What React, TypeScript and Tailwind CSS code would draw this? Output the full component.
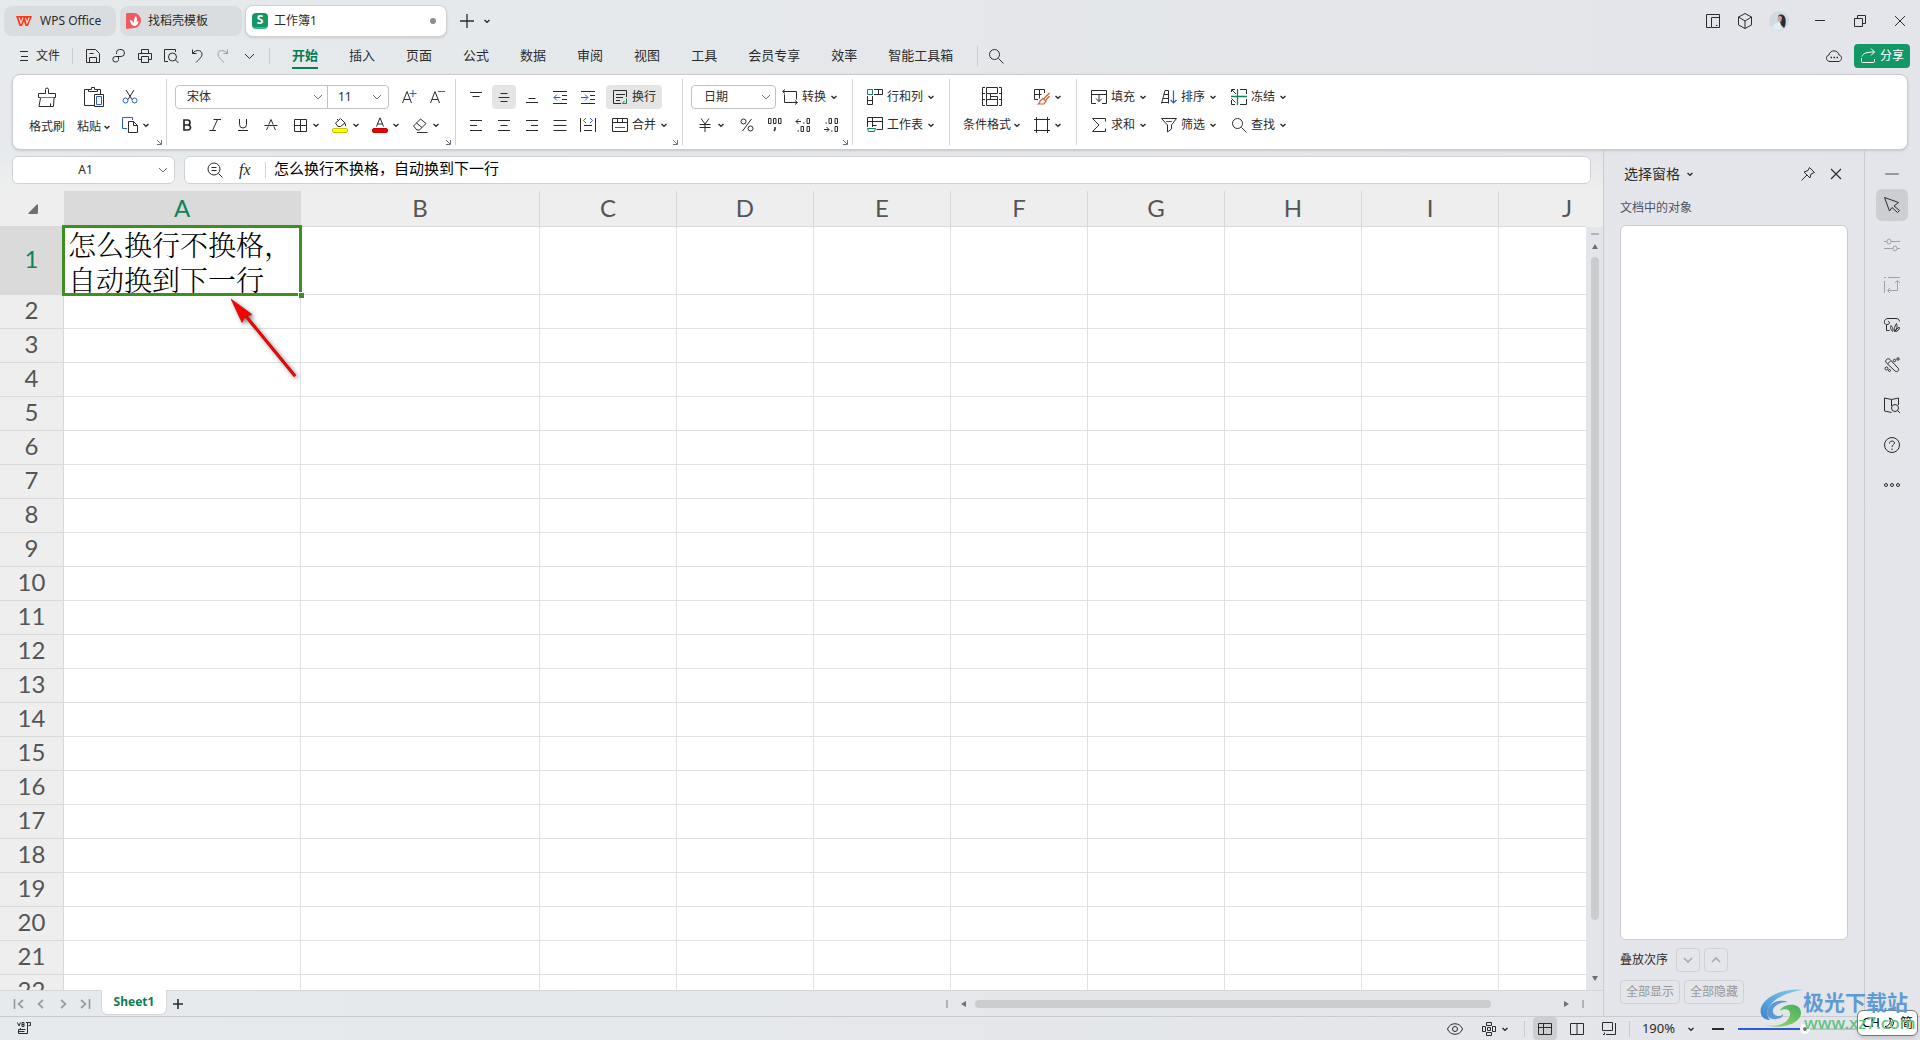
import type { ReactNode } from "react";
import { clsx } from "clsx";

type IconProps = { children: ReactNode; size?: string; className?: string; box?: number };

const Icon = ({ children, size = "size-4", className, box = 16 }: IconProps) => (
  <svg
    viewBox={`0 0 ${box} ${box}`}
    className={clsx("shrink-0", size, className)}
    fill="none"
    stroke="currentColor"
    aria-hidden="true"
  >
    {children}
  </svg>
);

const Caret = ({ className }: { className?: string }) => (
  <Icon box={8} size="size-2" className={className}>
    <path d="M1.5 3 4 5.2 6.5 3" strokeWidth="1.4" />
  </Icon>
);

const WideCaret = ({ className }: { className?: string }) => (
  <Icon box={10} size="size-2.5" className={clsx("text-gray-500", className)}>
    <path d="M1 3 5 7 9 3" />
  </Icon>
);

const BLUE = "#2b5bd7";
const GREEN = "#12825a";
const ORANGE = "#c8612c";

const icons = {
  save: (
    <Icon>
      <path d="M1.5 1.5h9l4 4v9h-13zM4.5 14.5v-5h7v5M4.5 5.5h4" />
    </Icon>
  ),
  link: (
    <Icon>
      <path d="M5.500 6V4.500a3 3 0 0 1 3-3H10a3 3 0 0 1 0 7H4.500a2.500 2.500 0 0 0 0 5.500c2 0 3-1 3-2.500v-3" />
    </Icon>
  ),
  print: (
    <Icon>
      <path d="M4.500 5V1.500h7V5M4 11.500H1.500v-6h13v6H12M4.500 8.500h7v6h-7z" />
    </Icon>
  ),
  preview: (
    <Icon>
      <path d="M5 13.500H1.500v-12h11V4" />
      <circle cx="9.500" cy="9" r="4" />
      <path d="m12.500 12 3 3" />
    </Icon>
  ),
  undo: (
    <Icon>
      <path d="M3.500 1.500v4h4M3.500 5.500C7 1 13 2 13 6c0 3-3 5.500-6 8.500" />
    </Icon>
  ),
  redo: (
    <Icon className="text-gray-400">
      <path d="M12.500 1.500v4h-4M12.500 5.500C9 1 3 2 3 6c0 3 3 5.500 6 8.500" />
    </Icon>
  ),
  search: (
    <Icon>
      <circle cx="6.500" cy="6.500" r="5" />
      <path d="m10.500 10.500 5 5" />
    </Icon>
  ),
  scissors: (
    <Icon>
      <path d="M4 1 10 10.500M12 1 6 10.500" />
      <circle cx="3.500" cy="11.500" r="2.500" stroke={BLUE} />
      <circle cx="12.500" cy="11.500" r="2.500" stroke={BLUE} />
    </Icon>
  ),
  copy: (
    <Icon>
      <path d="M10.500 3V.500h-10v11H5" stroke={BLUE} />
      <path d="M6.500 4.500h5l4 4v7h-9zM11.500 4.500v4h4" />
    </Icon>
  ),
  fontUp: (
    <Icon>
      <path d="M1.500 14 6 2.500 10.500 14M3 10.500h6" />
      <path d="M12 1v7M8.500 4.500h7" stroke={BLUE} />
    </Icon>
  ),
  fontDown: (
    <Icon>
      <path d="M1.500 14 6 2.500 10.500 14M3 10.500h6" />
      <path d="M9 2.500h7" stroke={BLUE} />
    </Icon>
  ),
  bold: (
    <Icon>
      <path d="M5 3h3.500a2.300 2.300 0 0 1 0 5H5zM5 8h4a2.500 2.500 0 0 1 0 5H5z" strokeWidth="1.700" />
    </Icon>
  ),
  italic: (
    <Icon>
      <path d="M6.500 2.500H14M2.500 13.500H9M10.500 2.500l-5 11" />
    </Icon>
  ),
  underline: (
    <Icon>
      <path d="M4.500 2v5.500a3.500 3.500 0 0 0 7 0V2M3 13.500h10" />
    </Icon>
  ),
  strike: (
    <Icon>
      <path d="m3.500 13 1.700-3.500M12.500 13l-1.700-3.500M5.800 7.500 8 2.500l2.200 5M1.500 8.500h13" />
    </Icon>
  ),
  borders: (
    <Icon>
      <path d="M2.500 2.500h12v12h-12zM8.500 2.500v12M2.500 8.500h12" />
    </Icon>
  ),
  fill: (
    <Icon>
      <path d="m3.500 6 5-4.500 4.500 4.500-4.500 3.500H6zM6.500 3.500 5 2M13.500 6.500v2.500" />
      <rect x=".5" y="11.500" width="15" height="4" rx="1.500" fill="#ffff00" stroke="#c5c500" />
    </Icon>
  ),
  fontColor: (
    <Icon>
      <path d="M4.500 9.500 8 .800l3.500 8.700M5.500 7h5" />
      <rect x=".5" y="11.500" width="15" height="4" rx="1.500" fill="#f40000" stroke="#c40000" />
    </Icon>
  ),
  eraser: (
    <Icon>
      <path d="m1.500 9 7-7 5.500 4.500-6.500 6.500H5zM4.500 6l5.500 4.500M5 15.500h10.500" />
    </Icon>
  ),
  alignTop: (
    <Icon>
      <path d="M2 3.500h12M4.500 7.500h7" />
    </Icon>
  ),
  alignMiddle: (
    <Icon>
      <path d="M4.500 4.500h7M2.500 8.500h11M4.500 12.500h7" />
    </Icon>
  ),
  alignBottom: (
    <Icon>
      <path d="M4.500 9.500h7M2 13.500h12" />
    </Icon>
  ),
  outdent: (
    <Icon>
      <path d="M1 2.500h14M10 6.500h5M10 10.500h5M1 14.500h14" />
      <path d="M8.500 8.500H2M5 5.500l-3 3 3 3" stroke={BLUE} />
    </Icon>
  ),
  indent: (
    <Icon>
      <path d="M1 2.500h14M10 6.500h5M10 10.500h5M1 14.500h14" />
      <path d="M1 8.500h6.500M5 5.500l3 3-3 3" stroke={BLUE} />
    </Icon>
  ),
  wrap: (
    <Icon>
      <path d="M9 14.500H1.500v-13h13V8M4 5.500h9M4 8.500h7M4 11.500h4" />
      <path d="M14.500 9.500v5h-4M12.500 12l-2.500 2.500" stroke={GREEN} />
    </Icon>
  ),
  left: (
    <Icon>
      <path d="M2 3.500h12M2 8.500h7M2 13.500h12" />
    </Icon>
  ),
  center: (
    <Icon>
      <path d="M2 3.500h12M4.500 8.500h7M2 13.500h12" />
    </Icon>
  ),
  right: (
    <Icon>
      <path d="M2 3.500h12M7 8.500h7M2 13.500h12" />
    </Icon>
  ),
  justify: (
    <Icon>
      <path d="M1.500 3.500h13M1.500 8.500h13M1.500 13.500h13" />
    </Icon>
  ),
  distribute: (
    <Icon>
      <path d="M.5 1v14M15.500 1v14M4 8.500h8M4 13.500h8" />
      <path d="M6 1 3.500 3.500 6 6M10 1l2.500 2.500L10 6" stroke={BLUE} />
    </Icon>
  ),
  merge: (
    <Icon>
      <path d="M.5 1.500h15v13H.5zM.5 5.500h15M5.500 1.500v4M10.500 1.500v4" />
      <path d="M3 10.500h10" stroke={GREEN} />
    </Icon>
  ),
  convert: (
    <Icon>
      <path d="M3 .500.500 2.500 3 4.500M1 2.500h13.500v8M13 11.500l2.500 2-2.500 2M15 13.500H2.500v-8" />
    </Icon>
  ),
  yen: (
    <Icon>
      <path d="m4 1.500 4 5.500 4-5.500M2.500 7.500h11M2.500 10.500h11M8 7v8" />
    </Icon>
  ),
  percent: (
    <Icon>
      <circle cx="4.500" cy="4.500" r="2.500" />
      <circle cx="11.500" cy="11.500" r="2.500" />
      <path d="m12.500 2-9 12" />
    </Icon>
  ),
  thousands: (
    <Icon>
      <path d="M1.500 1.500h2.500v5H1.500zM6.500 1.500H9v5H6.500zM11.500 1.500H14v5h-2.500z" />
      <path d="M8 10v2.500l-1 1.500" strokeWidth="1.500" />
    </Icon>
  ),
  decUp: (
    <Icon>
      <path d="M6 4.500H1M3.500 2 1 4.500 3.500 7M12 1.500h2.500v5H12zM6 9.500h2.500v5H6zM12 9.500h2.500v5H12zM8 6h1.500M2.500 14h1.500" />
    </Icon>
  ),
  decDown: (
    <Icon>
      <path d="M6 1.500h2.500v5H6zM12 1.500h2.500v5H12zM2.500 6h1.500M1 12.500h5M3.500 10 6 12.500 3.500 15M12 9.500h2.500v5H12zM8 14h1.500" />
    </Icon>
  ),
  rowsCols: (
    <Icon>
      <path d="M.5.500h5v5h-5z" stroke={GREEN} />
      <path d="M7 .500h8.500v5H7M11.500.500v5M.5 7v8.500h5V7M.5 11.500h5" />
    </Icon>
  ),
  worksheet: (
    <Icon>
      <path d="M.5 10V.500h15v12H9.500M.5 4.500h15M5.500.500v9.500M5.500 8.500h4" />
      <path d="M.5 11.500h8l-1 3h-6z" stroke={GREEN} />
    </Icon>
  ),
  condition: (
    <Icon box={20} size="size-5">
      <path d="M3 .500H.5v18H3M17 .500h2.500v18H17M.5 6.500H3M.5 12.500H3M17 6.500h2.500M17 12.500h2.500M4.500 .500h11v6h-11zM4.500 6.500v12h11v-6h-11M8.500 6.500v6M8.500 9.500h7v3" />
    </Icon>
  ),
  tableStyle: (
    <Icon>
      <path d="M4 10.500H.5V.500h10V4M.5 5.500h7M5.500.500v9" />
      <path d="M15.500 4 10 9.500M12 11l3.500-4M9 9.500l3 2.500-2 3H4.500c1.500-1 1.500-2 1.500-3z" stroke={ORANGE} strokeWidth="1.200" />
    </Icon>
  ),
  cellFrame: (
    <Icon>
      <path d="M2.500 0v16M13.500 0v16M0 2.500h16M0 13.500h16" />
    </Icon>
  ),
  fillDown: (
    <Icon>
      <path d="M5 14.500H.5v-13h15v13H11M.5 5.500h15M8 5.500v7M5 9.500l3 3 3-3" />
    </Icon>
  ),
  sort: (
    <Icon>
      <path d="M.5 14.500 4 1.500h3.500v13M3 5.500h4.500M2 9.500h5.500M.5 13.500h7" />
      <path d="M12.500 1.500v12M9.500 11l3 3 3-3" stroke={BLUE} strokeWidth="1.200" />
    </Icon>
  ),
  freeze: (
    <Icon>
      <path d="M9 .500h6.500V5M.5 3V.500H4M1 1l4 4M.5 11v4.500H4M.5 9.500l4 4M9 15.500h6.500V10" />
      <path d="M6.500 0v16M0 7.500h16" stroke={GREEN} strokeWidth="1.300" />
    </Icon>
  ),
  sum: (
    <Icon>
      <path d="M14.500 4.500v-3h-13l6.500 6.500-6.500 6.500h13v-3" />
    </Icon>
  ),
  filter: (
    <Icon>
      <path d="M.5 1.500h15L10.500 8v4l-4 3V8z" />
      <path d="M5 4.500h6" stroke={GREEN} />
    </Icon>
  ),
};

const sideIcons = [
  {
    label: "选择",
    active: true,
    icon: <path d="m.5.500 14 5-4.500 3.500 5.500 4.500-2 2-5.500-5-2.500 3.500z" />,
  },
  {
    label: "属性",
    muted: true,
    icon: <path d="M0 4.500h3M7 4.500h9M0 11.500h9M13 11.500h3M3 4.500a2 2.500 0 1 0 4 0 2 2.500 0 1 0-4 0M9 11.500a2 2.500 0 1 0 4 0 2 2.500 0 1 0-4 0" />,
  },
  {
    label: "变换",
    muted: true,
    icon: <path d="M0 .500h2M4 .500h12M.5 4v12M13.500 4v9.500H4M11 6l2.500-2.500L16 6M6 11l-2.500 2.500L6 16" />,
  },
  {
    label: "稻壳",
    icon: <path d="M2.500 7.500v6h3M2.500 7.500c-3 0-3-6 1.500-6h8c3 0 3.500 2 3.500 3M3 7.500c3 0 3.500-3 1-3M8.500 14.500c-3-3-1.500-6-1.500-6s3 3 1.500 6zM10.500 14.500c-1-4 2-8 2-8s2 5-2 8zM11.500 14.500c2 0 4-2 4-4-2 0-4 2-4 4z" />,
  },
  {
    label: "美化",
    icon: (
      <>
        <path d="M2.500 2.500c1-1 2.500-1 3.500 0l8 8.500c2 2-1 5-3 3L2.500 6c-1-1-1-2.500 0-3.500zM3.500 7l3-3" />
        <circle cx="10.500" cy="3.500" r="1.200" />
        <circle cx="14" cy="2" r="1.200" />
        <circle cx="2.500" cy="11.500" r="1.500" />
        <circle cx="5.500" cy="13.500" r="1" />
      </>
    ),
  },
  {
    label: "查阅",
    icon: (
      <>
        <path d="M7.500 2.500.5 1v13l7 1.500M7.500 2.500l7-1.500v7M7.500 2.500V9" />
        <circle cx="11" cy="11" r="3.500" />
        <path d="m13.500 13.500 2.500 2.500" />
      </>
    ),
  },
  {
    label: "帮助",
    icon: (
      <>
        <circle cx="8" cy="8" r="7.500" />
        <path d="M5.500 6.500c0-3.500 5-3 5-.500 0 1.500-2.500 2-2.500 4M8 11.500v1.500" />
      </>
    ),
  },
  {
    label: "更多",
    icon: (
      <>
        <circle cx="2" cy="8" r="1.500" />
        <circle cx="8" cy="8" r="1.500" />
        <circle cx="14" cy="8" r="1.500" />
      </>
    ),
  },
];

const menus = ["开始", "插入", "页面", "公式", "数据", "审阅", "视图", "工具", "会员专享", "效率", "智能工具箱"];

const columns = ["A", "B", "C", "D", "E", "F", "G", "H", "I", "J"];
const rows = Array.from({ length: 22 }, (_, i) => i + 1);

type ToolProps = { icon: ReactNode; label: string; active?: boolean };

// Square icon-only button
const Tool = ({ icon, label, active }: ToolProps) => (
  <button type="button" aria-label={label} className="flex h-6 w-7 items-center justify-center">
    <span className={clsx("flex size-6 items-center justify-center rounded", active && "bg-[#e5e5e5]")}>{icon}</span>
  </button>
);

// Icon with a drop-down caret
const DropTool = ({ icon, label }: ToolProps) => (
  <button type="button" aria-label={label} className="flex h-6 items-center gap-1 px-1.5">
    {icon}
    <Caret />
  </button>
);

// Icon + text, caret optional
const TextTool = ({ icon, label, active, caret = true }: ToolProps & { caret?: boolean }) => (
  <button
    type="button"
    className={clsx("flex h-6 items-center gap-1 rounded px-1.5 whitespace-nowrap", active && "bg-[#e5e5e5]")}
  >
    {icon}
    {label}
    {caret && <Caret />}
  </button>
);

const Group = ({ children, launcher, className }: { children: ReactNode; launcher?: boolean; className?: string }) => (
  <div className={clsx("relative my-1 flex shrink-0 border-r border-[#d4d4d4] py-1.5", className)}>
    {children}
    {launcher && (
      <button type="button" aria-label="更多设置" className="absolute right-1 bottom-0 text-gray-500">
        <Icon box={6} size="size-1.5">
          <path d="M1 1l4 4M5.500 1v4.500H1" />
        </Icon>
      </button>
    )}
  </div>
);

const Rows = ({ children }: { children: ReactNode }) => <div className="flex flex-col gap-1">{children}</div>;
const Row = ({ children, className }: { children: ReactNode; className?: string }) => (
  <div className={clsx("flex items-center", className)}>{children}</div>
);

const TitleBar = () => (
  <header className="flex h-[42px] shrink-0 items-center pl-1">
    <div className="flex h-[30px] w-28 items-center gap-2 rounded-lg bg-[#dadde0] pl-3">
      <svg viewBox="0 0 16 12" className="h-3 w-4" aria-hidden="true">
        <path d="M0 1h16l-4 10H9.500L8 6.500 6 11H3.500z" fill="#f23a1d" />
        <path d="M3 2.500 5 8l2-5.500M9.500 3l1.500 5 2.200-5.500" fill="none" stroke="#fbd9cf" strokeWidth="1.200" />
      </svg>
      WPS Office
    </div>
    <div className="ml-1 flex h-[30px] w-[122px] items-center gap-1.5 rounded-lg bg-[#dadde0] pl-1.5">
      <svg viewBox="0 0 16 16" className="size-4" aria-hidden="true">
        <path d="M1 0h7a7 7.500 0 0 1 0 15l-8 1V1z" fill="#ef5a5f" />
        <path d="M8 13C5 12 4 9 4 7c2 0 3 1 4 3 0-3 0-5 2-7 1.500 3 1 5 .500 6l2-1c0 3-2 5-4.500 5z" fill="#fff" />
      </svg>
      找稻壳模板
    </div>
    <div className="ml-[3px] flex h-8 w-[202px] items-center gap-1.5 rounded-lg border border-[#d0d3d6] bg-white pl-1.5 shadow-sm">
      <span className="flex size-4 items-center justify-center rounded-sm border-b-2 border-[#3fb485] bg-[#119866] text-xs leading-none font-bold text-white">
        S
      </span>
      工作簿1
      <span className="mr-2.5 ml-auto size-1.5 rounded-full bg-[#8f8f8f]" />
    </div>
    <button type="button" aria-label="新建" className="ml-3">
      <Icon>
        <path d="M8 1v14M1 8h14" strokeWidth="1.300" />
      </Icon>
    </button>
    <button type="button" aria-label="标签列表" className="ml-2">
      <Caret />
    </button>
    <div className="ml-auto flex items-center pr-3">
      <button type="button" aria-label="侧栏">
        <Icon>
          <path d="M6 14.500H1.500v-13h13v13h-8v-10h8M11 12.500h1.500" />
        </Icon>
      </button>
      <button type="button" aria-label="应用" className="ml-4">
        <Icon>
          <path d="m8 .500 6.500 3.500v8L8 15.500 1.500 12V4zM1.500 4 8 8l6.500-4M8 8v7.500" />
        </Icon>
      </button>
      <button type="button" aria-label="账户" className="ml-4">
        <svg viewBox="0 0 20 20" className="size-5" aria-hidden="true">
          <circle cx="10" cy="10" r="10" fill="#cfdbe2" />
          <path d="M9 5c3-3 7-1 7.500 3 .500 4 0 7-1.500 9l-3-3z" fill="#30292f" />
          <path d="M8.500 7c1-3 4-3 4.500 0l-1 4-3-1z" fill="#cfa29b" />
          <path d="M3 17c1-4 4-6 8-5l2 6c-4 1.500-7 1-10-1z" fill="#e2eff2" />
        </svg>
      </button>
      <button type="button" aria-label="最小化" className="ml-[23px]">
        <Icon>
          <path d="M3 7.500h10" />
        </Icon>
      </button>
      <button type="button" aria-label="还原" className="ml-6">
        <Icon>
          <path d="M2.500 5.500h8v8h-8zM5.500 5V2.500h8v8H11" />
        </Icon>
      </button>
      <button type="button" aria-label="关闭" className="ml-6">
        <Icon>
          <path d="m3 3 10 10M13 3 3 13" />
        </Icon>
      </button>
    </div>
  </header>
);

const MenuBar = () => (
  <nav className="mb-1 flex h-7 shrink-0 items-center">
    <button type="button" className="ml-4 flex items-center gap-1">
      <Icon>
        <path d="M4 3.500h8M5 8.500h7M4 12.500h8" />
      </Icon>
      文件
    </button>
    <span className="mx-3 h-4 w-px bg-[#c9ccd0]" />
    <div className="flex items-center gap-[10px]">
      <button type="button" aria-label="保存">{icons.save}</button>
      <button type="button" aria-label="输出">{icons.link}</button>
      <button type="button" aria-label="打印">{icons.print}</button>
      <button type="button" aria-label="打印预览">{icons.preview}</button>
      <button type="button" aria-label="撤销">{icons.undo}</button>
      <button type="button" aria-label="恢复">{icons.redo}</button>
      <button type="button" aria-label="自定义">
        <Icon>
          <path d="m4 6 4.500 4.500L13 6" />
        </Icon>
      </button>
    </div>
    <span className="ml-3 h-4 w-px bg-[#c9ccd0]" />
    <div className="ml-[22px] flex gap-[31px] text-[13px]">
      {menus.map((menu, i) => (
        <a
          key={menu}
          href="#"
          className={clsx(
            "border-b-2 pt-0.5 pb-0.5 leading-5",
            i === 0 ? "border-[#087a55] font-bold text-[#087a55]" : "border-transparent"
          )}
        >
          {menu}
        </a>
      ))}
    </div>
    <span className="ml-6 h-5 w-px bg-[#c9ccd0]" />
    <button type="button" aria-label="搜索" className="ml-[10px]">
      {icons.search}
    </button>
    <div className="mr-2.5 ml-auto flex items-center gap-3">
      <button type="button" aria-label="云同步">
        <Icon>
          <path d="M4 13.500c-4.500 0-4.500-6-1-6.500 1-5.500 9-5.500 10 0 3.500.500 3.500 6.500-1 6.500z" />
          <path d="M4.500 9.500h1.500M7.500 9.500H9M10.500 9.500H12" strokeWidth="1.500" />
        </Icon>
      </button>
      <button type="button" className="flex h-6 w-14 items-center justify-center gap-1 rounded bg-[#129866] text-white">
        <Icon>
          <path d="M1.500 10v3.500q0 1 1 1h11q1 0 1-1V11M2 8.500c1-3 4-4.500 12.500-4.500M11 .500 14.500 4 11 7.500" />
        </Icon>
        分享
      </button>
    </div>
  </nav>
);

const Ribbon = () => (
  <section className="mx-3 flex h-[76px] shrink-0 overflow-hidden rounded-lg border border-[#caccd1] bg-white shadow">
    <Group launcher className="w-[154px] pl-3">
      <button type="button" className="flex w-11 flex-col items-center justify-between">
        <span className="flex h-6 items-center">
          <Icon box={20} size="size-5">
            <path d="M1.500 6.500h7v-4a1.500 1.500 0 0 1 3 0v4h7v4h-17zM3.500 11 2 19.500h14.500L17 11M13.500 19.500v-3" />
            <path d="M3 10.500h14" stroke={ORANGE} />
          </Icon>
        </span>
        <span className="h-6 leading-6">格式刷</span>
      </button>
      <button type="button" className="ml-[3px] flex w-11 flex-col items-center justify-between">
        <span className="flex h-6 items-center">
          <Icon box={20} size="size-5">
            <path d="M5 2.500H.5v16H10M13 2.500h3.500V7M4.500 4.500v-2h3v-2h3v2h3v2z" />
            <path d="M12.500 9.500h5v8h-5z" stroke={BLUE} />
            <path d="M10.500 7.500h9v12h-9z" />
          </Icon>
        </span>
        <span className="flex h-6 items-center gap-0.5">
          粘贴
          <Caret />
        </span>
      </button>
      <div className="flex flex-col items-start gap-1">
        <Tool icon={icons.scissors} label="剪切" />
        <DropTool icon={icons.copy} label="复制" />
      </div>
    </Group>

    <Group launcher className="w-[289px] pl-1.5">
      <Rows>
        <Row className="pl-0.5">
          <div className="flex h-6 w-[214px] rounded border border-[#c2c2c2]">
            <label className="relative flex w-[152px] items-center border-r border-[#c2c2c2]">
              <select aria-label="字体" className="w-full appearance-none bg-transparent pl-[11px] outline-none">
                <option>宋体</option>
              </select>
              <WideCaret className="pointer-events-none absolute right-1" />
            </label>
            <label className="relative flex flex-1 items-center">
              <select aria-label="字号" className="w-full appearance-none bg-transparent pl-2.5 outline-none">
                <option>11</option>
              </select>
              <WideCaret className="pointer-events-none absolute right-1.5" />
            </label>
          </div>
          <span className="w-1.5" />
          <Tool icon={icons.fontUp} label="增大字号" />
          <Tool icon={icons.fontDown} label="减小字号" />
        </Row>
        <Row>
          <Tool icon={icons.bold} label="加粗" />
          <Tool icon={icons.italic} label="倾斜" />
          <Tool icon={icons.underline} label="下划线" />
          <Tool icon={icons.strike} label="删除线" />
          <span className="w-px" />
          <DropTool icon={icons.borders} label="边框" />
          <DropTool icon={icons.fill} label="填充颜色" />
          <DropTool icon={icons.fontColor} label="字体颜色" />
          <DropTool icon={icons.eraser} label="清除" />
        </Row>
      </Rows>
    </Group>

    <Group launcher className="w-[227px] pl-1.5">
      <Rows>
        <Row>
          <Tool icon={icons.alignTop} label="顶端对齐" />
          <Tool icon={icons.alignMiddle} label="垂直居中" active />
          <Tool icon={icons.alignBottom} label="底端对齐" />
          <Tool icon={icons.outdent} label="减少缩进量" />
          <Tool icon={icons.indent} label="增加缩进量" />
          <span className="w-1" />
          <TextTool icon={icons.wrap} label="换行" active caret={false} />
        </Row>
        <Row>
          <Tool icon={icons.left} label="左对齐" />
          <Tool icon={icons.center} label="水平居中" />
          <Tool icon={icons.right} label="右对齐" />
          <Tool icon={icons.justify} label="两端对齐" />
          <Tool icon={icons.distribute} label="分散对齐" />
          <span className="w-1" />
          <TextTool icon={icons.merge} label="合并" />
        </Row>
      </Rows>
    </Group>

    <Group launcher className="w-[170px] pl-2">
      <Rows>
        <Row>
          <label className="relative flex h-6 w-[85px] items-center rounded border border-[#c2c2c2]">
            <select aria-label="数字格式" className="w-full appearance-none bg-transparent pl-3 outline-none">
              <option>日期</option>
            </select>
            <WideCaret className="pointer-events-none absolute right-1" />
          </label>
          <TextTool icon={icons.convert} label="转换" />
        </Row>
        <Row>
          <DropTool icon={icons.yen} label="货币" />
          <span className="w-0.5" />
          <Tool icon={icons.percent} label="百分比" />
          <Tool icon={icons.thousands} label="千位分隔" />
          <Tool icon={icons.decUp} label="增加小数位" />
          <Tool icon={icons.decDown} label="减少小数位" />
        </Row>
      </Rows>
    </Group>

    <Group className="px-2">
      <Rows>
        <TextTool icon={icons.rowsCols} label="行和列" />
        <TextTool icon={icons.worksheet} label="工作表" />
      </Rows>
    </Group>

    <Group className="gap-0.5 px-2">
      <button type="button" className="flex w-[68px] flex-col items-center gap-1">
        <span className="flex h-6 items-center">{icons.condition}</span>
        <span className="flex h-6 items-center gap-0.5">
          条件格式
          <Caret />
        </span>
      </button>
      <Rows>
        <DropTool icon={icons.tableStyle} label="表格样式" />
        <DropTool icon={icons.cellFrame} label="单元格样式" />
      </Rows>
    </Group>

    <div className="my-1 grid grid-cols-3 content-start gap-x-0.5 gap-y-1 py-1.5 pl-2">
      <TextTool icon={icons.fillDown} label="填充" />
      <TextTool icon={icons.sort} label="排序" />
      <TextTool icon={icons.freeze} label="冻结" />
      <TextTool icon={icons.sum} label="求和" />
      <TextTool icon={icons.filter} label="筛选" />
      <TextTool icon={icons.search} label="查找" />
    </div>
  </section>
);

const FormulaBar = () => (
  <div className="flex shrink-0 gap-[9px] bg-gradient-to-b from-transparent to-[#eeeeee] px-3 pt-1.5 pb-[7px]">
    <div className="flex h-7 w-[163px] items-center rounded-md border border-[#cfd1d4] bg-white pr-1.5">
      <input aria-label="名称框" defaultValue="A1" className="w-full min-w-0 bg-transparent pr-2 pl-2 text-center outline-none" />
      <WideCaret />
    </div>
    <div className="flex h-7 flex-1 items-center rounded-md border border-[#cfd1d4] bg-white pl-[22px]">
      <Icon>
        <circle cx="7" cy="7" r="6" />
        <path d="m11.500 11.500 4 4M4.500 5.500h5M4.500 8.500h5" />
      </Icon>
      <span className="ml-4 w-5 font-['Liberation_Serif',serif] text-base italic">fx</span>
      <span className="ml-1.5 h-4 w-px bg-[#d4d4d4]" />
      <input
        aria-label="编辑栏"
        defaultValue="怎么换行不换格，自动换到下一行"
        className="ml-2 h-6 flex-1 bg-transparent pb-1.5 text-[15px] text-black outline-none"
      />
    </div>
  </div>
);

const Sheet = () => (
  <div className="relative min-h-0 flex-1 overflow-hidden bg-white">
    <table className="w-[1636px] table-fixed border-separate border-spacing-0">
      <colgroup>
        <col className="w-16" />
        <col className="w-[237px]" />
        <col className="w-[239px]" />
      </colgroup>
      <thead>
        <tr className="h-9 bg-[#eeeeee] font-['Lato',sans-serif] text-2xl leading-6 text-[#555]">
          <th className="border-b border-[#d9d9d9] p-0">
            <svg viewBox="0 0 10 10" className="ml-7 size-2.5" aria-hidden="true">
              <path d="M10 1v7.500q0 1.500-1.500 1.500H1q-1 0-.500-1L8.500.800Q10-.500 10 1z" fill="#6f6f6f" />
            </svg>
          </th>
          {columns.map((col) => (
            <th
              key={col}
              className={clsx(
                "border-r border-b border-[#d9d9d9] p-0 pb-0.5 font-normal",
                col === "A" && "bg-[#dadada] text-[#0f8259]"
              )}
            >
              {col}
            </th>
          ))}
        </tr>
      </thead>
      <tbody>
        {rows.map((row) => (
          <tr key={row} className={row === 1 ? "h-[68px]" : "h-[34px]"}>
            <th
              className={clsx(
                "border-r border-b border-[#d9d9d9] p-0 pb-1 font-['Lato',sans-serif] text-2xl leading-6 font-normal",
                row === 1 ? "bg-[#dadada] text-[#0f8259]" : "bg-[#eeeeee] text-[#555]"
              )}
            >
              {row}
            </th>
            {columns.map((col) => (
              <td
                key={col}
                className={clsx("border-r border-b border-[#e1e1e1] p-0", row === 1 && col === "A" && "relative z-10")}
              >
                {row === 1 && col === "A" && (
                  <>
                    <div className="h-[67px] pl-1 font-['Noto_Serif_CJK_SC','Noto_Sans_CJK_SC',serif] text-[28px] leading-[35px] font-light whitespace-nowrap text-black">
                      怎么换行不换格，
                      <br />
                      自动换到下一行
                    </div>
                    <div className="absolute -inset-0.5 border-3 border-[#3f9020]" />
                    <div className="absolute -right-1 -bottom-1 size-1.5 border-t border-l border-white bg-[#3f9020]" />
                  </>
                )}
              </td>
            ))}
          </tr>
        ))}
      </tbody>
    </table>
    <svg
      viewBox="0 0 80 92"
      className="absolute top-[104px] left-[225px] z-20 h-[92px] w-20 drop-shadow-[2px_2px_2px_rgba(0,0,0,0.5)]"
      aria-hidden="true"
    >
      <path d="M20 20 70 81" stroke="#a81010" strokeWidth="3" />
      <path d="M20 20 70 81" stroke="#fb0000" strokeWidth="2" />
      <path d="M6 4 27 19.500l-7 2.500-3 5.500z" fill="#fb0000" stroke="#a81010" strokeWidth=".6" />
    </svg>
  </div>
);

const Arrow = ({ d }: { d: string }) => (
  <svg viewBox="0 0 6 6" className="size-1.5 shrink-0" aria-hidden="true">
    <path d={d} fill="#707070" />
  </svg>
);

const sheetNav = [
  { label: "第一张", d: "M3.500 3v10M12 4 7.500 8l4.500 4" },
  { label: "上一张", d: "M10 4 5.500 8l4.500 4" },
  { label: "下一张", d: "m6 4 4.500 4L6 12" },
  { label: "最后一张", d: "m4 4 4.500 4L4 12M12.500 3v10" },
];

const SheetTabs = () => (
  <div className="flex h-[26px] shrink-0 items-center border-t border-[#d4d6d9]">
    <div className="flex w-[101px] gap-[6px] pl-[11px] text-[#9a9da0]">
      {sheetNav.map(({ label, d }) => (
        <button key={label} type="button" aria-label={label}>
          <Icon>
            <path d={d} strokeWidth="1.700" />
          </Icon>
        </button>
      ))}
    </div>
    <button
      type="button"
      className="-mt-px h-[25px] w-[66px] self-start rounded-b-md border-x border-b border-[#d4d6d9] bg-white font-bold text-[#0f7a55]"
    >
      Sheet1
    </button>
    <button type="button" aria-label="新建工作表" className="ml-[3px]">
      <Icon>
        <path d="M8 3v10M3 8h10" strokeWidth="1.600" />
      </Icon>
    </button>
    <div className="ml-auto flex w-[657px] items-center pr-[19px]">
      <span className="h-2 w-0.5 bg-[#b1b3b6]" />
      <span className="w-3" />
      <Arrow d="M6 0v6L1 3z" />
      <span className="ml-[9px] h-2 w-[516px] rounded bg-[#cbccce]" />
      <span className="flex-1" />
      <Arrow d="M0 0v6l5-3z" />
      <span className="ml-3 h-2 w-0.5 bg-[#b1b3b6]" />
    </div>
  </div>
);

const VerticalScroll = () => (
  <div className="mt-9 flex w-[17px] shrink-0 flex-col items-center bg-[#e4e5ea]">
    <span className="mt-1.5 h-0.5 w-2 bg-[#b1b3b6]" />
    <span className="h-2" />
    <Arrow d="M0 6h6L3 1z" />
    <span className="mt-2 mb-14 w-2 flex-1 rounded bg-[#cbccce]" />
    <Arrow d="M0 0h6L3 5z" />
    <span className="h-2" />
  </div>
);

const SelectionPane = () => (
  <aside className="flex w-[262px] shrink-0 flex-col border-x border-[#c9cbd0] pr-4 pl-4">
    <div className="mt-[13px] flex h-[22px] items-center pl-1">
      <h2 className="text-sm">选择窗格</h2>
      <Caret className="ml-1.5" />
      <button type="button" aria-label="固定" className="mr-3 ml-auto">
        <Icon>
          <path d="M9.500 1.500 14.500 6.500 11 8l-1 4-6-6 4-1.500zM7 9 1.500 14.500" />
        </Icon>
      </button>
      <button type="button" aria-label="关闭窗格" className="mr-1">
        <Icon>
          <path d="m3 3 10 10M13 3 3 13" strokeWidth="1.200" />
        </Icon>
      </button>
    </div>
    <p className="mt-[13px] leading-5 text-[#4d5368]">文档中的对象</p>
    <ul aria-label="文档中的对象" className="mt-[7px] flex-1 rounded-md border border-[#cbcdd2] bg-white" />
    <div className="mt-2 flex h-6 items-center gap-1">
      <span className="mr-1">叠放次序</span>
      <button type="button" aria-label="下移" className="flex size-6 items-center justify-center rounded border border-[#cfd1d5] text-[#a8aaad]">
        <Icon box={10} size="size-2.5">
          <path d="m1 3 4 4 4-4" strokeWidth="1.600" />
        </Icon>
      </button>
      <button type="button" aria-label="上移" className="flex size-6 items-center justify-center rounded border border-[#cfd1d5] text-[#a8aaad]">
        <Icon box={10} size="size-2.5">
          <path d="m1 7 4-4 4 4" strokeWidth="1.600" />
        </Icon>
      </button>
    </div>
    <div className="mt-2 mb-3 flex gap-1 text-[#95979a]">
      <button type="button" className="h-6 w-[60px] rounded border border-[#cfd1d5]">
        全部显示
      </button>
      <button type="button" className="h-6 w-[60px] rounded border border-[#cfd1d5]">
        全部隐藏
      </button>
    </div>
  </aside>
);

const SideBar = () => (
  <aside className="flex w-[55px] shrink-0 flex-col items-center gap-2 pt-[23px] pr-0.5">
    <span className="mb-1.5 h-0.5 w-3.5 rounded bg-[#97999c]" />
    {sideIcons.map(({ label, icon, active, muted }) => (
      <button
        key={label}
        type="button"
        aria-label={label}
        className={clsx(
          "flex size-8 items-center justify-center rounded-md",
          active && "bg-[#cdced2]",
          muted && "text-[#9fa1a5]"
        )}
      >
        <Icon className="overflow-visible">{icon}</Icon>
      </button>
    ))}
  </aside>
);

const StatusBar = () => (
  <footer className="flex h-6 shrink-0 items-center border-t border-[#c9cbd0] pr-[58px] pl-4">
    <button type="button" aria-label="宏">
      <Icon>
        <path d="M1.500 1.500 3 5l1.500-3.500M6 1.500h2v4H6zM6 3.500h2M10 1.500h4.500v3h-2M11.500 1.500v11M11.500 12.500H2.500v-4h7M4.500 8.500V7M2.500 10.500h6" />
      </Icon>
    </button>
    <div className="ml-auto flex items-center">
      <button type="button" aria-label="护眼模式">
        <Icon>
          <path d="M.5 8C3 1 13 1 15.500 8 13 15 3 15 .500 8z" />
          <circle cx="8" cy="8" r="2.500" />
        </Icon>
      </button>
      <button type="button" aria-label="阅读模式" className="ml-[18px] flex items-center gap-1">
        <Icon>
          <path d="M5.500 1.500h5v3h-5zM5.500 11.500h5v3h-5zM1.500 5.500h3v5h-3zM11.500 5.500h3v5h-3zM6.500 6.500h3v3h-3z" />
        </Icon>
        <Caret />
      </button>
      <span className="mr-2 ml-[15px] h-4 w-px bg-[#c9cbd0]" />
      <button type="button" aria-label="普通视图" className="flex h-[23px] w-6 items-center justify-center rounded bg-[#cdced2]">
        <Icon>
          <path d="M1.500 2.500h13v11h-13zM1.500 6.500h13M6.500 2.500v11" />
        </Icon>
      </button>
      <button type="button" aria-label="分页预览" className="ml-3">
        <Icon>
          <path d="M1.500 2.500h13v11h-13zM8 2.500v11" />
        </Icon>
      </button>
      <button type="button" aria-label="页面布局" className="ml-4">
        <Icon>
          <path d="M1.500 1.500h10v8h-10zM14.500 2v11.500H5M2 13.500h1.500v-2" />
        </Icon>
      </button>
      <span className="mx-3 h-4 w-px bg-[#c9cbd0]" />
      <span className="text-[13px]">190%</span>
      <Caret className="ml-3" />
      <button type="button" aria-label="缩小" className="ml-[15px]">
        <Icon>
          <path d="M2 8h12" strokeWidth="2" />
        </Icon>
      </button>
      <input
        type="range"
        aria-label="缩放"
        min={0}
        max={100}
        defaultValue={54}
        className="ml-3 h-0.5 w-[124px] appearance-none bg-[linear-gradient(to_right,#2b5bd7_54%,#c0c2c6_54%)] [&::-webkit-slider-thumb]:size-2.5 [&::-webkit-slider-thumb]:appearance-none [&::-webkit-slider-thumb]:rounded-full [&::-webkit-slider-thumb]:border-3 [&::-webkit-slider-thumb]:border-white [&::-webkit-slider-thumb]:bg-[#777]"
      />
    </div>
  </footer>
);

// Download-site badge and input-method bubble floating over the corner
const CornerBadges = () => (
  <div className="pointer-events-none absolute right-0 bottom-0 h-[54px] w-[162px]">
    <div className="absolute right-0.5 bottom-1 flex h-[26px] w-[61px] items-center justify-center gap-1 rounded-md border border-[#777] bg-white text-[13px] text-black shadow-md">
      <span>CH</span>
      <Icon box={12} size="size-3">
        <path d="M5.500 1C10 2 11 8 6.500 10.500 4.500 11.500 2 11 1 9.500 5 9.500 7.500 5 5.500 1z" />
      </Icon>
      <span>简</span>
    </div>
    <svg viewBox="0 0 44 44" className="absolute top-0 left-0.5 size-11" aria-hidden="true">
      <defs>
        <linearGradient id="sky" x1="0" y1="1" x2="1" y2="0">
          <stop offset="0" stopColor="#3f84cc" />
          <stop offset="1" stopColor="#7fd0ee" />
        </linearGradient>
        <linearGradient id="leaf" x1="0" y1="1" x2="1" y2="0">
          <stop offset="0" stopColor="#a5dc62" />
          <stop offset="1" stopColor="#3fae63" />
        </linearGradient>
      </defs>
      <path d="M43 4C20 1-3 15 1 28c1 4 5 6 9 6C1 24 14 8 43 4z" fill="url(#sky)" />
      <path d="M5 39c14 3 24-3 25-10 1-6-6-7-10-4 3-8 21-9 21 2C41 38 20 44 5 39z" fill="url(#leaf)" />
      <path d="M7 27c0-9 12-15 21-11-8 0-16 4-15 10 1 5 8 5 10 2 1 6-16 8-16-1z" fill="#5a9ad6" />
    </svg>
    <div className="absolute top-[3px] left-[45px] text-[21px] leading-[26px] font-bold whitespace-nowrap text-[#5e9bd3]">
      极光下载站
    </div>
    <div className="absolute top-7 left-[46px] text-[17px] leading-[18px] font-medium whitespace-nowrap text-[#5fc282]">
      www.xz7.com
    </div>
  </div>
);

export default function App() {
  return (
    <div className="relative flex h-screen flex-col overflow-hidden bg-gradient-to-r from-[#e6eaec] to-[#e4e5ea] font-['Noto_Sans','Noto_Sans_CJK_SC',sans-serif] text-xs text-[#2b2b2b]">
      <TitleBar />
      <MenuBar />
      <Ribbon />
      <div className="flex min-h-0 flex-1">
        <main className="flex min-w-0 flex-1 flex-col">
          <FormulaBar />
          <div className="flex min-h-0 flex-1 bg-[#eeeeee]">
            <Sheet />
            <VerticalScroll />
          </div>
          <SheetTabs />
        </main>
        <SelectionPane />
        <SideBar />
      </div>
      <StatusBar />
      <CornerBadges />
    </div>
  );
}
